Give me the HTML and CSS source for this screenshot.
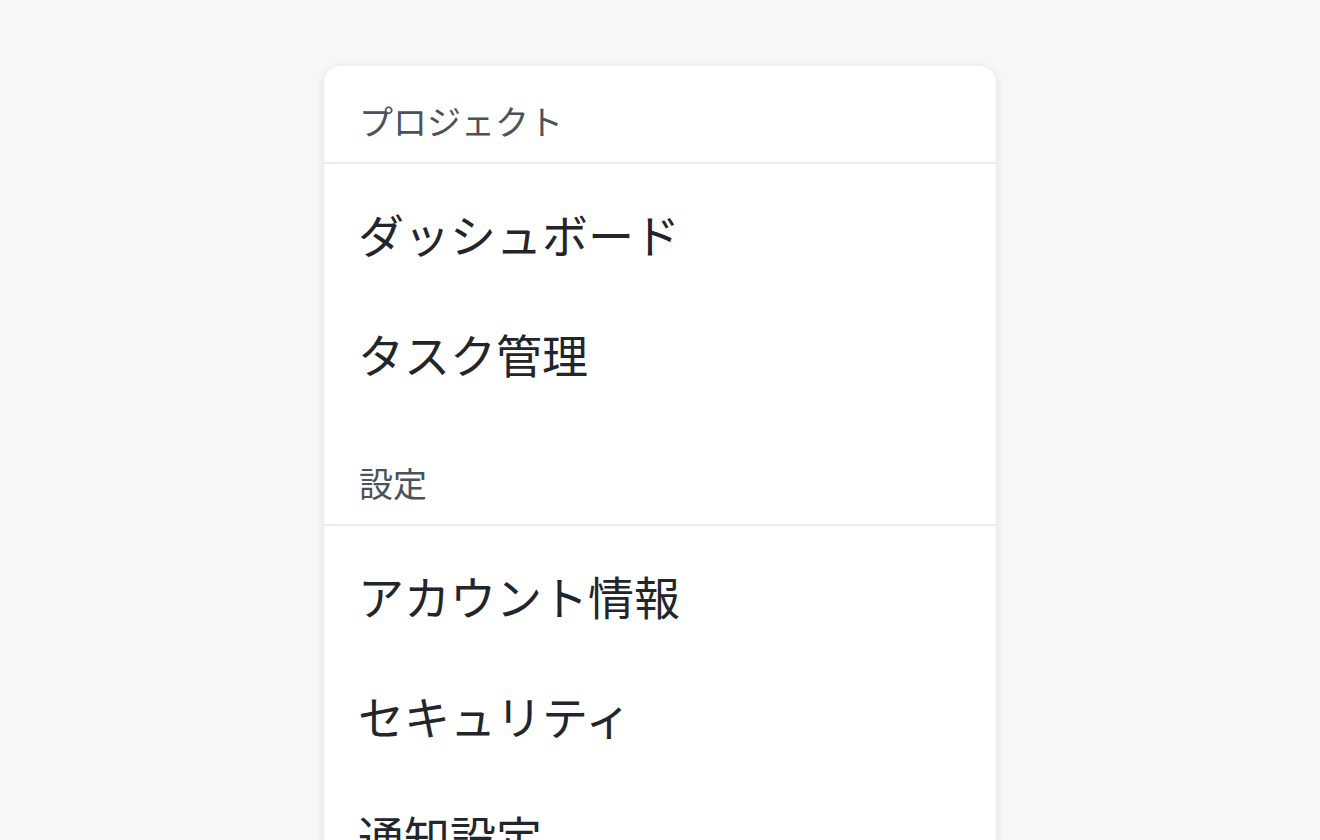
FILE: index.html
```html
<!DOCTYPE html>
<html lang="ja">
<head>
<meta charset="UTF-8">
<title>メニュー</title>
<link rel="stylesheet" href="styles.css">
</head>
<body>
<div class="menu">
  <div class="section">
    <div class="section-title">プロジェクト</div>
    <ul class="items">
      <li class="item">ダッシュボード</li>
      <li class="item">タスク管理</li>
    </ul>
  </div>
  <div class="section">
    <div class="section-title">設定</div>
    <ul class="items">
      <li class="item">アカウント情報</li>
      <li class="item">セキュリティ</li>
      <li class="item">通知設定</li>
    </ul>
  </div>
</div>
</body>
</html>
```

FILE: styles.css
```css
*{
    box-sizing:border-box;
    margin:0;
    padding:0;
}
body{
    font-family:"Noto Sans CJK JP", "Noto Sans", sans-serif;
    background:#f6f7f9;
    height:100vh;
    overflow:hidden;
    display:flex;
    justify-content:center;
    padding-top:66px;
}
.menu{
    width:672px;
    background:#fff;
    border-radius:16px;
    box-shadow:0 2px 10px rgba(20,30,50,0.10);
    align-self:flex-start;
}
.section-title{
    height:98px;
    padding:29px 35px 0;
    font-size:34px;
    line-height:52px;
    color:#4a525c;
    border-bottom:2px solid #eaecf1;
}
.items{
    list-style:none;
    padding:9px 0 15px;
}
.item{
    height:120px;
    padding:0 34px;
    display:flex;
    align-items:center;
    font-size:46px;
    color:#22262c;
}
```
